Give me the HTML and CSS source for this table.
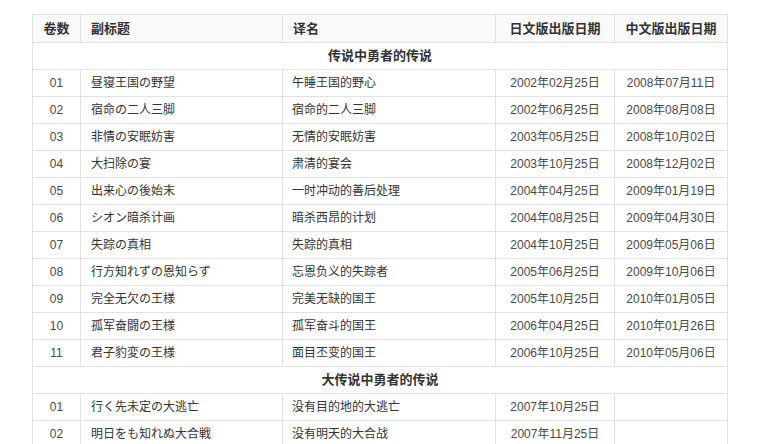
FILE: index.html
```html
<!DOCTYPE html>
<html lang="zh">
<head>
<meta charset="utf-8">
<link rel="stylesheet" href="styles.css">
</head>
<body>
<div class="page">
<table class="vol-table">
  <colgroup>
    <col class="c-no"><col class="c-sub"><col class="c-tr"><col class="c-jp"><col class="c-cn">
  </colgroup>
  <thead>
    <tr>
      <th class="center">卷数</th>
      <th class="left">副标题</th>
      <th class="left">译名</th>
      <th class="center">日文版出版日期</th>
      <th class="center">中文版出版日期</th>
    </tr>
  </thead>
  <tbody>
    <tr class="section"><td colspan="5">传说中勇者的传说</td></tr>
    <tr><td class="num">01</td><td>昼寝王国の野望</td><td>午睡王国的野心</td><td class="date">2002年02月25日</td><td class="date">2008年07月11日</td></tr>
    <tr><td class="num">02</td><td>宿命の二人三脚</td><td>宿命的二人三脚</td><td class="date">2002年06月25日</td><td class="date">2008年08月08日</td></tr>
    <tr><td class="num">03</td><td>非情の安眠妨害</td><td>无情的安眠妨害</td><td class="date">2003年05月25日</td><td class="date">2008年10月02日</td></tr>
    <tr><td class="num">04</td><td>大扫除の宴</td><td>肃清的宴会</td><td class="date">2003年10月25日</td><td class="date">2008年12月02日</td></tr>
    <tr><td class="num">05</td><td>出来心の後始末</td><td>一时冲动的善后处理</td><td class="date">2004年04月25日</td><td class="date">2009年01月19日</td></tr>
    <tr><td class="num">06</td><td>シオン暗杀计画</td><td>暗杀西昂的计划</td><td class="date">2004年08月25日</td><td class="date">2009年04月30日</td></tr>
    <tr><td class="num">07</td><td>失踪の真相</td><td>失踪的真相</td><td class="date">2004年10月25日</td><td class="date">2009年05月06日</td></tr>
    <tr><td class="num">08</td><td>行方知れずの恩知らず</td><td>忘恩负义的失踪者</td><td class="date">2005年06月25日</td><td class="date">2009年10月06日</td></tr>
    <tr><td class="num">09</td><td>完全无欠の王様</td><td>完美无缺的国王</td><td class="date">2005年10月25日</td><td class="date">2010年01月05日</td></tr>
    <tr><td class="num">10</td><td>孤军奋闘の王様</td><td>孤军奋斗的国王</td><td class="date">2006年04月25日</td><td class="date">2010年01月26日</td></tr>
    <tr><td class="num">11</td><td>君子豹変の王様</td><td>面目丕变的国王</td><td class="date">2006年10月25日</td><td class="date">2010年05月06日</td></tr>
    <tr class="section"><td colspan="5">大传说中勇者的传说</td></tr>
    <tr><td class="num">01</td><td>行く先未定の大逃亡</td><td>没有目的地的大逃亡</td><td class="date">2007年10月25日</td><td class="date"></td></tr>
    <tr><td class="num">02</td><td>明日をも知れぬ大合戦</td><td>没有明天的大合战</td><td class="date">2007年11月25日</td><td class="date"></td></tr>
  </tbody>
</table>
</div>
</body>
</html>
```

FILE: styles.css
```css
html, body {
  margin: 0;
  padding: 0;
  background: #ffffff;
}
.page {
  padding: 14px 0 0 32px;
  font-family: "Liberation Sans", Arial, "Noto Sans CJK SC", sans-serif;
  font-size: 12px;
  color: #333;
}
.vol-table {
  border-collapse: collapse;
  table-layout: fixed;
  width: 695px;
  border: 1px solid #e2e2e2;
}
.c-no { width: 48px; }
.c-sub { width: 202px; }
.c-tr { width: 213px; }
.c-jp { width: 119px; }
.c-cn { width: 113px; }
.vol-table th,
.vol-table td {
  border: 1px solid #e2e2e2;
  padding: 0 9px;
  height: 26px;
  line-height: 16px;
  white-space: nowrap;
  overflow: hidden;
  text-align: left;
}
.vol-table th {
  height: 27px;
  background: #f9f9f9;
  font-size: 13px;
  font-weight: bold;
  color: #333;
}
.vol-table th.center { text-align: center; padding: 0 2px; }
.vol-table th.left { padding-left: 10px; }
.vol-table td:nth-child(2) { padding-left: 10px; }
.vol-table td.num,
.vol-table td.date {
  text-align: center;
  color: #4a4a4a;
  padding: 0 2px;
}
.vol-table tr.section td {
  text-align: center;
  font-size: 13px;
  font-weight: bold;
  color: #333;
}
```
